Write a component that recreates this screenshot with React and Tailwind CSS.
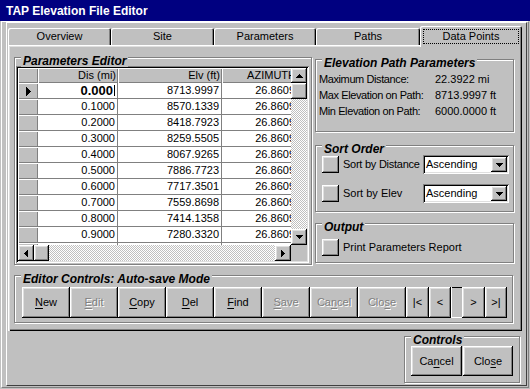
import React from "react";

const R =
  "bg-[#c0c0c0] shadow-[inset_-1px_-1px_#000,inset_1px_1px_#fff,inset_-2px_-2px_#808080,inset_2px_2px_#dfdfdf]";
const R1 = "bg-[#c0c0c0] shadow-[inset_1px_1px_#fff,inset_-1px_-1px_#808080]";
const S =
  "shadow-[inset_1px_1px_#808080,inset_-1px_-1px_#fff,inset_2px_2px_#000,inset_-2px_-2px_#dfdfdf]";
const DITHER =
  "bg-[repeating-conic-gradient(#fff_0_25%,#c0c0c0_0_50%)] bg-[length:2px_2px]";
const DIS = "text-[#808080] [text-shadow:1px_1px_0_#fff]";

function Arrow({ dir, size = 4 }) {
  const rects = [];
  const horiz = dir === "left" || dir === "right";
  for (let i = 0; i < size; i++) {
    if (dir === "up") rects.push({ x: size - 1 - i, y: i, w: 2 * i + 1, h: 1 });
    if (dir === "down") rects.push({ x: size - 1 - i, y: size - 1 - i, w: 2 * i + 1, h: 1 });
    if (dir === "left") rects.push({ x: i, y: size - 1 - i, w: 1, h: 2 * i + 1 });
    if (dir === "right") rects.push({ x: size - 1 - i, y: size - 1 - i, w: 1, h: 2 * i + 1 });
  }
  const W = horiz ? size : 2 * size - 1;
  const H = horiz ? 2 * size - 1 : size;
  return (
    <svg width={W} height={H} shapeRendering="crispEdges" className="block">
      {rects.map((r, k) => (
        <rect key={k} x={r.x} y={r.y} width={r.w} height={r.h} fill="#000" />
      ))}
    </svg>
  );
}

function Group({ title, className = "", children }) {
  return (
    <div
      className={
        "relative flex-none border border-[#808080] shadow-[inset_1px_1px_#fff,1px_1px_#fff] " +
        className
      }
    >
      <div className="absolute left-[6px] top-[-3px] px-[2px] bg-[#c0c0c0] font-bold italic text-[12px] leading-[12px] whitespace-nowrap">
        {title}
      </div>
      {children}
    </div>
  );
}

function Select({ value }) {
  return (
    <div className={"w-[86px] h-[19px] flex-none bg-white p-[2px] flex " + S}>
      <span className="flex-1 flex items-center pl-[1px]">{value}</span>
      <span className={"w-[16px] h-[15px] flex items-center justify-center " + R}>
        <Arrow dir="down" />
      </span>
    </div>
  );
}

function Btn({ children, w = "w-[48px]", h = "h-[31px]", disabled }) {
  return (
    <div className={`${w} ${h} flex-none flex items-center justify-center ${R} ${disabled ? DIS : ""}`}>
      {children}
    </div>
  );
}

const U = ({ children }) => <span className="underline underline-offset-[2px]">{children}</span>;

const rows = [
  ["0.0000", "8713.9997"],
  ["0.1000", "8570.1339"],
  ["0.2000", "8418.7923"],
  ["0.3000", "8259.5505"],
  ["0.4000", "8067.9265"],
  ["0.5000", "7886.7723"],
  ["0.6000", "7717.3501"],
  ["0.7000", "7559.8698"],
  ["0.8000", "7414.1358"],
  ["0.9000", "7280.3320"],
  ["1.0000", "7160.0000"],
];

function Grid() {
  return (
    <div className={"ml-[1px] mt-[8px] w-[293px] h-[197px] p-[2px] bg-white " + S}>
      <div className="flex h-[177px]">
        <div className="w-[273px] overflow-hidden flex flex-col">
          <div className="flex h-[15px] flex-none w-[280px]">
            <div className={"w-[20px] flex-none " + R1} />
            <div className={"w-[80px] flex-none flex items-center justify-end pr-[2px] " + R1}>Dis (mi)</div>
            <div className={"w-[104px] flex-none flex items-center justify-end pr-[2px] " + R1}>Elv (ft)</div>
            <div className={"w-[76px] flex-none flex items-center justify-end pr-[2px] " + R1}>AZIMUTH</div>
          </div>
          {rows.map((r, i) => (
            <div key={i} className="flex h-[16px] flex-none w-[280px]">
              <div className={"w-[20px] flex-none flex items-center pl-[8px] " + R1}>
                {i === 0 && <Arrow dir="right" size={5} />}
              </div>
              <div className="w-[80px] flex-none flex items-center justify-end pr-[2px] border-r border-b border-[#808080] bg-white">
                {i === 0 ? (
                  <span className="font-bold text-[13px] flex items-center">
                    0.000<span className="inline-block w-[1px] h-[11px] bg-black ml-[1px]" />
                  </span>
                ) : (
                  r[0]
                )}
              </div>
              <div className="w-[104px] flex-none flex items-center justify-end pr-[2px] border-r border-b border-[#808080] bg-white">
                {r[1]}
              </div>
              <div className="w-[76px] flex-none flex items-center justify-end pr-[2px] border-r border-b border-[#808080] bg-white">
                26.8609
              </div>
            </div>
          ))}
        </div>
        <div className="w-[16px] flex flex-col">
          <div className={"h-[15px] flex items-center justify-center " + R}>
            <Arrow dir="up" />
          </div>
          <div className={"h-[16px] " + R} />
          <div className={"flex-1 " + DITHER} />
          <div className={"h-[16px] flex items-center justify-center " + R}>
            <Arrow dir="down" />
          </div>
        </div>
      </div>
      <div className="flex h-[16px]">
        <div className={"w-[16px] flex items-center justify-center " + R}>
          <Arrow dir="left" />
        </div>
        <div className={"w-[15px] " + R} />
        <div className={"flex-1 " + DITHER} />
        <div className={"w-[16px] flex items-center justify-center " + R}>
          <Arrow dir="right" />
        </div>
        <div className="w-[16px] bg-[#c0c0c0]" />
      </div>
    </div>
  );
}

function Tab({ label, w, selected }) {
  if (selected)
    return (
      <div
        className={`${w} h-[21px] mb-[-2px] relative z-10 bg-[#c0c0c0] flex items-center justify-center rounded-t-[2px] shadow-[inset_1px_1px_#fff,inset_-1px_0_#000,inset_-2px_0_#808080]`}
      >
        <span className="absolute left-[3px] right-[3px] top-[3px] bottom-[3px] border border-dotted border-black" />
        {label}
      </div>
    );
  return (
    <div
      className={`${w} h-[17px] bg-[#c0c0c0] flex items-center justify-center rounded-t-[2px] shadow-[inset_1px_1px_#fff,inset_-1px_0_#000,inset_-2px_0_#808080]`}
    >
      {label}
    </div>
  );
}

export default function App() {
  return (
    <div className="w-[530px] h-[389px] bg-[#c0c0c0] font-['Liberation_Sans',Arial,sans-serif] text-[11px] leading-none text-black flex flex-col overflow-hidden">
      <div className="h-[21px] flex-none bg-[#000080] text-white font-bold text-[12px] flex items-center pl-[6px] pt-[1px]">
        TAP Elevation File Editor
      </div>
      <div className="flex-1 flex mx-[1px] mb-[1px] border border-white border-r-[#808080] border-b-[#808080] pl-[4px] pr-[1px] pb-[1px]">
        <div className="flex-1 flex flex-col border border-white border-r-[#404040] border-b-[#404040] pl-[1px]">
          <div className="h-[22px] flex items-end">
            <Tab label="Overview" w="w-[103px]" />
            <Tab label="Site" w="w-[103px]" />
            <Tab label="Parameters" w="w-[102px]" />
            <Tab label="Paths" w="w-[104px]" />
            <Tab label="Data Points" w="w-[102px]" selected />
          </div>
          <div className="w-[514px] h-[286px] flex-none bg-[#c0c0c0] p-[2px] shadow-[inset_1px_1px_#fff,inset_2px_2px_#dfdfdf,inset_-1px_-1px_#000,inset_-2px_-2px_#808080]">
            <div className="flex flex-col pl-[4px] pt-[10px]">
              <div className="flex">
                <Group title="Parameters Editor" className="w-[298px] h-[208px]">
                  <Grid />
                </Group>
                <div className="ml-[3px] mt-[2px] flex flex-col">
                  <Group title="Elevation Path Parameters" className="w-[199px] h-[73px]">
                    <div className="pt-[11px] pl-[3px] leading-[16px] grid grid-cols-[116px_auto]">
                      <span className="tracking-[-0.4px] whitespace-nowrap">Maximum Distance:</span>
                      <span>22.3922 mi</span>
                      <span className="tracking-[-0.4px] whitespace-nowrap">Max Elevation on Path:</span>
                      <span>8713.9997 ft</span>
                      <span className="tracking-[-0.4px] whitespace-nowrap">Min Elevation on Path:</span>
                      <span>6000.0000 ft</span>
                    </div>
                  </Group>
                  <Group title="Sort Order" className="w-[199px] h-[67px] mt-[13px]">
                    <div className="pt-[9px] pl-[6px] flex flex-col gap-[10px]">
                      <div className="flex items-center h-[19px]">
                        <div className={"w-[17px] h-[17px] flex-none " + R} />
                        <span className="w-[80px] flex-none ml-[4px] whitespace-nowrap tracking-[-0.25px]">Sort by Distance</span>
                        <Select value="Ascending" />
                      </div>
                      <div className="flex items-center h-[19px]">
                        <div className={"w-[17px] h-[17px] flex-none " + R} />
                        <span className="w-[80px] flex-none ml-[4px] whitespace-nowrap">Sort by Elev</span>
                        <Select value="Ascending" />
                      </div>
                    </div>
                  </Group>
                  <Group title="Output" className="w-[199px] h-[40px] mt-[11px]">
                    <div className="pt-[15px] pl-[6px] flex items-center">
                      <div className={"w-[17px] h-[17px] " + R} />
                      <span className="ml-[4px]">Print Parameters Report</span>
                    </div>
                  </Group>
                </div>
              </div>
              <Group title="Editor Controls: Auto-save Mode" className="w-[499px] h-[48px] mt-[10px]">
                <div className="flex pt-[11px] pl-[7px]">
                  <Btn><U>N</U>ew</Btn>
                  <Btn disabled><U>E</U>dit</Btn>
                  <Btn><U>C</U>opy</Btn>
                  <Btn><U>D</U>el</Btn>
                  <Btn><U>F</U>ind</Btn>
                  <Btn disabled><U>S</U>ave</Btn>
                  <Btn disabled>Ca<U>n</U>cel</Btn>
                  <Btn disabled>Clo<U>s</U>e</Btn>
                  <Btn w="w-[23px]">|&lt;</Btn>
                  <Btn w="w-[22px]">&lt;</Btn>
                  <div className="w-[11px] h-[31px] bg-[#c0c0c0] shadow-[inset_1px_0_#fff,inset_0_-1px_#fff,inset_0_1px_#000]" />
                  <Btn w="w-[23px]">&gt;</Btn>
                  <Btn w="w-[22px]">&gt;|</Btn>
                </div>
              </Group>
            </div>
          </div>
          <div className="pl-[396px] mt-[5px]">
            <Group title="Controls" className="w-[116px] h-[47px]">
              <div className="flex gap-[1px] pt-[9px] pl-[6px]">
                <Btn w="w-[51px]" h="h-[30px]">Ca<U>n</U>cel</Btn>
                <Btn w="w-[50px]" h="h-[30px]">Clo<U>s</U>e</Btn>
              </div>
            </Group>
          </div>
        </div>
      </div>
    </div>
  );
}
